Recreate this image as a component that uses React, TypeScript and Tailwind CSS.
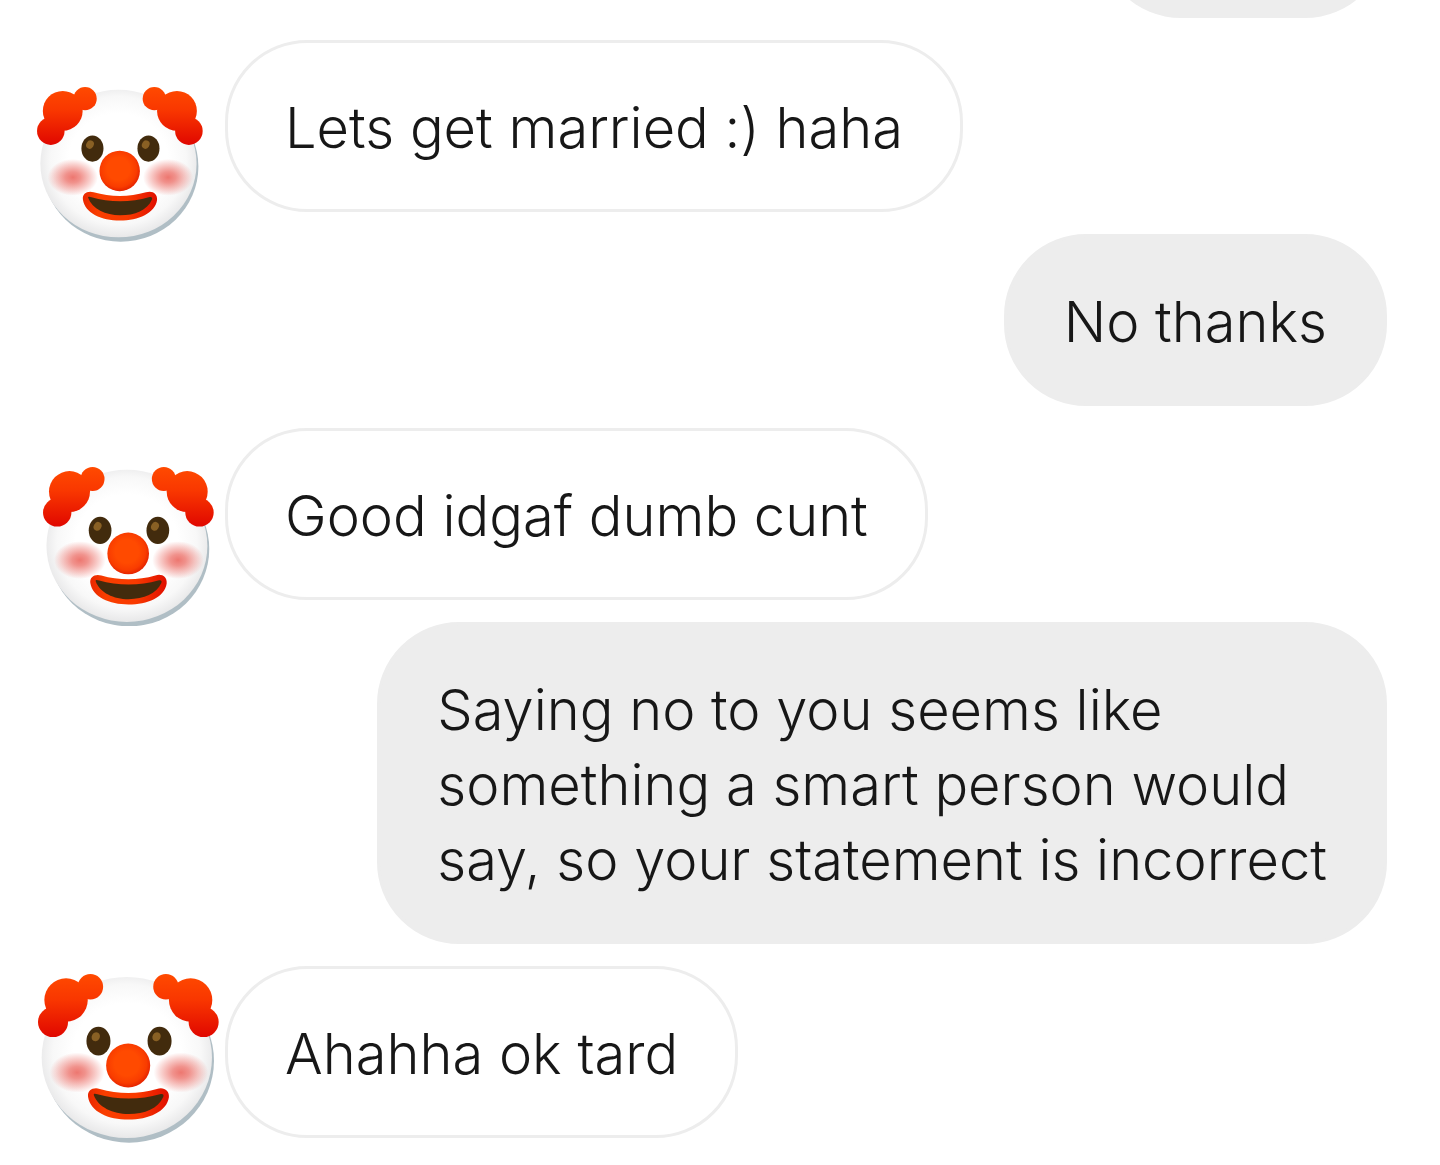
type Sticker = "top" | "middle" | "bottom"

type Message = {
  text: string
  mine?: boolean
  sticker?: Sticker
}

const messages: Message[] = [
  { text: "Lets get married :) haha", sticker: "top" },
  { text: "No thanks", mine: true },
  { text: "Good idgaf dumb cunt", sticker: "middle" },
  {
    text: "Saying no to you seems like\nsomething a smart person would\nsay, so your statement is incorrect",
    mine: true,
  },
  { text: "Ahahha ok tard", sticker: "bottom" },
]

const stickerStyles: Record<Sticker, string> = {
  top: "mt-[47px] ml-[37px] w-[166px]",
  middle: "mt-[39px] ml-[43px] w-[171px]",
  bottom: "mt-[8px] ml-[38px] w-[181px]",
}

// Gradients shared by every clown on the page
function ClownDefs() {
  return (
    <svg className="absolute size-0" aria-hidden="true">
      <defs>
        <radialGradient id="clown-face" cx="0.5" cy="0.48" r="0.53">
          <stop offset="0.6" stopColor="#ffffff" />
          <stop offset="0.82" stopColor="#f8f8f8" />
          <stop offset="1" stopColor="#e6e6e7" />
        </radialGradient>
        <radialGradient id="clown-cheek">
          <stop offset="0" stopColor="#ed7770" />
          <stop offset="0.3" stopColor="#ed7770" stopOpacity="0.8" />
          <stop offset="0.7" stopColor="#ed7770" stopOpacity="0.35" />
          <stop offset="1" stopColor="#ed7770" stopOpacity="0" />
        </radialGradient>
        <radialGradient id="clown-nose" cx="0.47" cy="0.45" r="0.56">
          <stop offset="0.5" stopColor="#ff4a00" />
          <stop offset="0.8" stopColor="#f93c00" />
          <stop offset="1" stopColor="#e42200" />
        </radialGradient>
        <linearGradient id="clown-lips" x1="0" x2="1" y1="0" y2="0">
          <stop offset="0" stopColor="#ea2700" />
          <stop offset="0.2" stopColor="#f93e00" />
          <stop offset="0.6" stopColor="#f93a00" />
          <stop offset="1" stopColor="#e00f00" />
        </linearGradient>
        <linearGradient id="clown-hair" gradientUnits="userSpaceOnUse" x1="0" x2="0" y1="43" y2="232">
          <stop offset="0" stopColor="#ff4a00" />
          <stop offset="0.4" stopColor="#f93700" />
          <stop offset="1" stopColor="#e00700" />
        </linearGradient>
      </defs>
    </svg>
  )
}

function Clown({ className }: { className: string }) {
  return (
    <svg viewBox="55 43 542 505" className={className} role="img" aria-label="Clown">
      <ellipse cx="328" cy="303" rx="254" ry="245" fill="#b0bec5" />
      <ellipse cx="321" cy="293" rx="255" ry="241" fill="url(#clown-face)" />
      <ellipse cx="172" cy="338" rx="82" ry="60" fill="url(#clown-cheek)" />
      <ellipse cx="483" cy="338" rx="82" ry="60" fill="url(#clown-cheek)" />
      <g fill="url(#clown-hair)">
        <circle cx="139" cy="121" r="65" />
        <circle cx="212" cy="81" r="38" />
        <circle cx="100" cy="187" r="45" />
        <circle cx="512" cy="121" r="65" />
        <circle cx="438" cy="81" r="38" />
        <circle cx="551" cy="187" r="45" />
        {/* fills the notches between the curls */}
        <path d="M172 75L190 105L202 118L182 118Z" />
        <path d="M478 75L460 105L448 118L468 118Z" />
        <path d="M82 148L70 160L110 190L144 184Z" />
        <path d="M569 148L581 160L541 190L507 184Z" />
      </g>
      <ellipse cx="236" cy="244" rx="36" ry="43" fill="#422b0d" />
      <ellipse cx="419" cy="244" rx="36" ry="43" fill="#422b0d" />
      <ellipse cx="228" cy="231" rx="12" ry="14" fill="#896024" transform="rotate(30 228 231)" />
      <ellipse cx="410" cy="231" rx="12" ry="14" fill="#896024" transform="rotate(30 410 231)" />
      <circle cx="325" cy="317" r="66" fill="url(#clown-nose)" />
      <path
        d="M205 411C202 391 220 381 240 387C295 403 356 403 411 387C431 380 449 391 447 412C441 455 386 479 326 479C265 479 212 455 205 411Z"
        fill="url(#clown-lips)"
      />
      <path
        d="M222 405C221 400 227 401 233 403C290 420 364 420 420 403C429 400 433 404 430 411C415 445 375 462 326 462C280 462 235 442 222 405Z"
        fill="#422b0d"
      />
    </svg>
  )
}

function Bubble({ text, mine }: Message) {
  return (
    <p
      className={`rounded-[82px] border-3 border-[#ededed] px-[57px] pt-[48px] pb-[43px] whitespace-pre text-[56px] leading-[75px] ${
        mine ? "bg-[#ededed]" : "bg-white"
      }`}
    >
      {text}
    </p>
  )
}

export default function App() {
  return (
    <main className="min-h-screen overflow-hidden bg-white pb-[27px] font-['Inter',sans-serif] font-[330] text-[#171717]">
      <ClownDefs />
      <div className="flex flex-col gap-[22px]">
        {/* tail end of the previous message, scrolled off the top */}
        <div className="flex h-[18px] items-end justify-end overflow-hidden pr-[53px]">
          <div className="h-[172px] w-[288px] shrink-0 rounded-[82px] bg-[#ededed]" />
        </div>
        {messages.map((message) => (
          <div key={message.text} className={message.mine ? "flex justify-end pr-[53px]" : "flex"}>
            {message.sticker && (
              <div className="h-0 w-[225px] shrink-0">
                <Clown className={stickerStyles[message.sticker]} />
              </div>
            )}
            <Bubble {...message} />
          </div>
        ))}
      </div>
    </main>
  )
}
